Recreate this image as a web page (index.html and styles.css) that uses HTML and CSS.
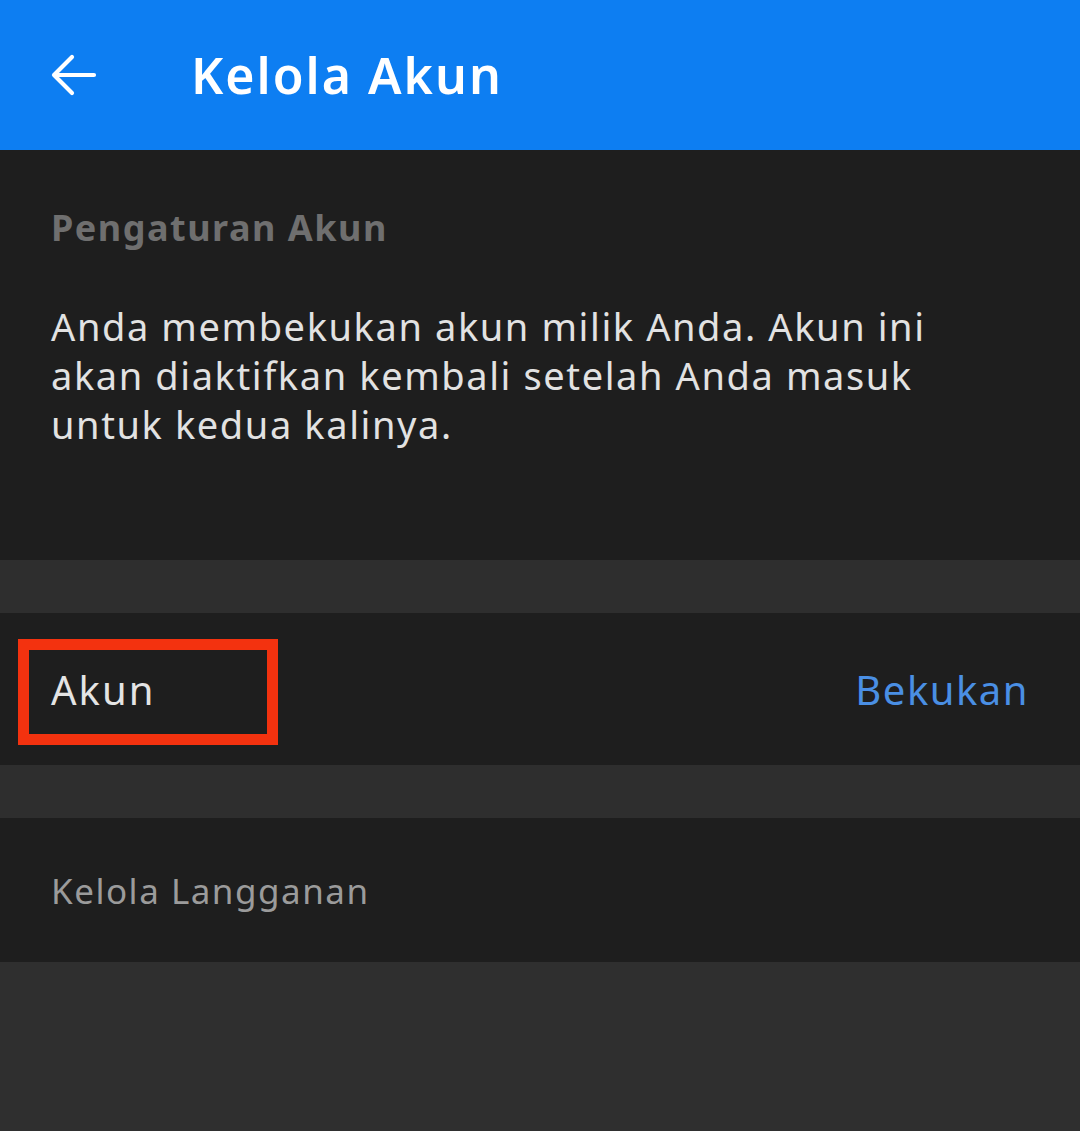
FILE: index.html
```html
<!DOCTYPE html>
<html lang="id">
<head>
<meta charset="utf-8">
<title>Kelola Akun</title>
<link rel="stylesheet" href="styles.css">
</head>
<body>
<header class="appbar">
  <svg class="back" width="48" height="44" viewBox="0 0 48 44" aria-hidden="true">
    <path d="M44 22H4M22 4L4 22L22 40" fill="none" stroke="#fff" stroke-width="4.2" stroke-linecap="round" stroke-linejoin="round"/>
  </svg>
  <h1 class="title">Kelola Akun</h1>
</header>
<main>
  <section class="info">
    <h2 class="info-head">Pengaturan Akun</h2>
    <p class="info-text">Anda membekukan akun milik Anda. Akun ini akan diaktifkan kembali setelah Anda masuk untuk kedua kalinya.</p>
  </section>
  <div class="spacer"></div>
  <section class="row">
    <span class="row-label"><span class="highlight"></span>Akun</span>
    <span class="row-action">Bekukan</span>
  </section>
  <div class="spacer"></div>
  <section class="row row-sub">
    <span class="sub-label">Kelola Langganan</span>
  </section>
</main>
</body>
</html>
```
FILE: styles.css
```css
html, body {
  margin: 0;
  padding: 0;
}
body {
  width: 1080px;
  height: 1131px;
  background: #2f2f2f;
  font-family: "Noto Sans", "DejaVu Sans", sans-serif;
  overflow: hidden;
}
.appbar {
  height: 150px;
  background: #0d7ef2;
  display: flex;
  align-items: center;
  padding-left: 50px;
  box-sizing: border-box;
}
.back {
  display: block;
  margin-right: 93px;
}
.title {
  margin: 0;
  color: #fff;
  font-size: 50px;
  font-weight: 600;
  letter-spacing: 2px;
}
.info {
  background: #1e1e1e;
  height: 410px;
  box-sizing: border-box;
  padding: 50px 51px 0;
}
.info-head {
  margin: 0;
  color: #6f6f6f;
  font-size: 36px;
  font-weight: 700;
  line-height: 56px;
  letter-spacing: 1.5px;
}
.info-text {
  margin: 46px 0 0;
  max-width: 935px;
  color: #e2e2e2;
  font-size: 38px;
  line-height: 49px;
  letter-spacing: 1.6px;
}
.spacer {
  height: 53px;
  background: #2e2e2e;
}
.row {
  height: 152px;
  background: #1e1e1e;
  display: flex;
  align-items: center;
  justify-content: space-between;
  padding: 0 51px;
  box-sizing: border-box;
}
.row-label {
  position: relative;
  color: #e4e4e4;
  font-size: 40px;
  letter-spacing: 2px;
}
.highlight {
  position: absolute;
  left: -33px;
  top: -23px;
  width: 260px;
  height: 106px;
  border: 11px solid #f3320f;
  box-sizing: border-box;
}
.row-action {
  color: #4a8fe4;
  font-size: 40px;
  letter-spacing: 1.5px;
}
.row-sub {
  height: 144px;
}
.sub-label {
  color: #9b9b9b;
  font-size: 35px;
  letter-spacing: 1.5px;
}
```
